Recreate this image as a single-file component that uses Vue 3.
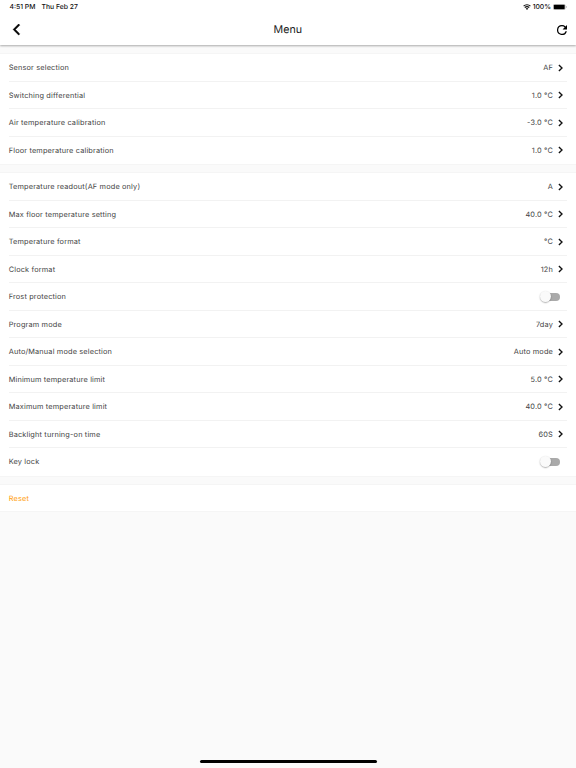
<script setup>
const groups = [
  [
    { label: 'Sensor selection', value: 'AF' },
    { label: 'Switching differential', value: '1.0 °C' },
    { label: 'Air temperature calibration', value: '-3.0 °C' },
    { label: 'Floor temperature calibration', value: '1.0 °C' },
  ],
  [
    { label: 'Temperature readout(AF mode only)', value: 'A' },
    { label: 'Max floor temperature setting', value: '40.0 °C' },
    { label: 'Temperature format', value: '°C' },
    { label: 'Clock format', value: '12h' },
    { label: 'Frost protection', toggle: true },
    { label: 'Program mode', value: '7day' },
    { label: 'Auto/Manual mode selection', value: 'Auto mode' },
    { label: 'Minimum temperature limit', value: '5.0 °C' },
    { label: 'Maximum temperature limit', value: '40.0 °C' },
    { label: 'Backlight turning-on time', value: '60S' },
    { label: 'Key lock', toggle: true },
  ],
]
</script>

<template>
  <div class="screen">
    <header class="top">
      <div class="status">
        <span class="time">4:51 PM</span>
        <span class="date">Thu Feb 27</span>
        <svg class="wifi" viewBox="0 0 16 12">
          <path d="M8 12 5.4 9.2a3.7 3.7 0 0 1 5.2 0Z" fill="#111" />
          <path d="M3.6 7.2a6.2 6.2 0 0 1 8.8 0M1.2 4.4a9.6 9.6 0 0 1 13.6 0" fill="none" stroke="#111" stroke-width="2.3" />
        </svg>
        <span class="percent">100%</span>
        <svg class="battery" viewBox="0 0 28 12">
          <rect x=".5" y=".5" width="24" height="11" rx="3" fill="none" stroke="#999" />
          <rect x="1.6" y="1.6" width="21.8" height="8.8" rx="1.6" fill="#000" />
          <path d="M26 4v4q1.5-.6 1.5-2T26 4Z" fill="#999" />
        </svg>
      </div>
      <div class="bar">
        <div class="side"><svg class="back" viewBox="0 0 24 24"><path d="M17.8 3.9 15.9 2l-10 10 10 10 1.9-1.9L9.7 12Z" fill="#000" stroke="#000" stroke-width="1.3" /></svg></div>
        <h1>Menu</h1>
        <div class="side end"><svg class="refresh" viewBox="4 4 16 16"><path d="M17.65 6.35A7.96 7.96 0 0 0 12 4a8 8 0 1 0 7.73 10h-2.08A6 6 0 1 1 12 6c1.66 0 3.14.69 4.22 1.78L13 11h7V4Z" fill="#000" /></svg></div>
      </div>
    </header>
    <main>
      <section v-for="(rows, g) in groups" :key="g" class="group">
        <div v-for="row in rows" :key="row.label" class="row">
          <span class="label">{{ row.label }}</span>
          <span v-if="row.toggle" class="switch"><i class="knob"></i></span>
          <template v-else>
            <span class="value">{{ row.value }}</span>
            <svg class="chevron" viewBox="0 0 5 8"><path d="M.9 .9 4 4 .9 7.1" fill="none" stroke="#111" stroke-width="1.35" /></svg>
          </template>
        </div>
      </section>
      <section class="group">
        <div class="row reset"><span class="label">Reset</span></div>
      </section>
    </main>
    <footer><div class="home"></div></footer>
  </div>
</template>

<style>
body { margin: 0; background: #fafafa; }
</style>

<style scoped>
.screen {
  box-sizing: border-box;
  width: 576px;
  height: 768px;
  display: flex;
  flex-direction: column;
  overflow: hidden;
  background: #fafafa;
  color: #444;
  font-family: Inter, "Liberation Sans", sans-serif;
  text-rendering: geometricPrecision;
}
.top { height: 45px; flex: none; background: #fff; box-shadow: 0 1px 2px rgba(0, 0, 0, .32); }
.status {
  height: 14px;
  padding: 0 9.5px 0 9.5px;
  display: flex;
  align-items: center;
  font-size: 6.8px;
  font-weight: 500;
  line-height: 14px;
  color: #111;
}
.time { width: 32px; white-space: nowrap; }
.date { white-space: nowrap; }
.wifi { width: 8px; height: 6px; margin-left: auto; }
.percent { margin-left: 2px; }
.battery { width: 14px; height: 6px; margin-left: 1.5px; }
.bar {
  height: 31px;
  padding: 0 9px 0 9.6px;
  display: flex;
  align-items: center;
}
.side { flex: 1; display: flex; align-items: center; }
.end { justify-content: flex-end; }
.bar h1 { margin: 0 1px 0 0; padding-top: 1px; font-size: 10.7px; font-weight: 400; line-height: 30px; color: #222; }
.back { width: 13px; height: 13px; }
.refresh { width: 10px; height: 10px; }
main { padding-top: 9px; display: flex; flex-direction: column; gap: 9.2px; }
.group { background: #fff; box-shadow: 0 0 0 .5px #f0f0f0; }
.row {
  box-sizing: border-box;
  height: 27.5px;
  margin: 0 9px;
  display: flex;
  align-items: center;
  border-bottom: 1px solid #f2f2f2;
  font-size: 7.35px;
  letter-spacing: .16px;
}
.row:last-child { border-bottom-color: transparent; }
.label { flex: 1; margin-left: -.3px; padding-top: 1px; }
.value { padding-top: 1px; }
.chevron { width: 5px; height: 8px; margin: 1px 4px 0 5px; }
.switch {
  width: 17px;
  height: 8px;
  margin: 1px 7px 0 0;
  display: flex;
  align-items: center;
  border-radius: 4px;
  background: #aaa;
}
.knob {
  width: 11px;
  height: 11px;
  flex: none;
  margin-left: -3px;
  border-radius: 50%;
  background: #fafafa;
  box-shadow: 0 .7px 1.5px rgba(0, 0, 0, .4);
}
.reset { color: #ff9d0a; height: 26.6px; }
footer { margin-top: auto; height: 8px; display: flex; justify-content: center; align-items: flex-start; }
.home { width: 177px; height: 3px; border-radius: 2px; background: #000; }
</style>
